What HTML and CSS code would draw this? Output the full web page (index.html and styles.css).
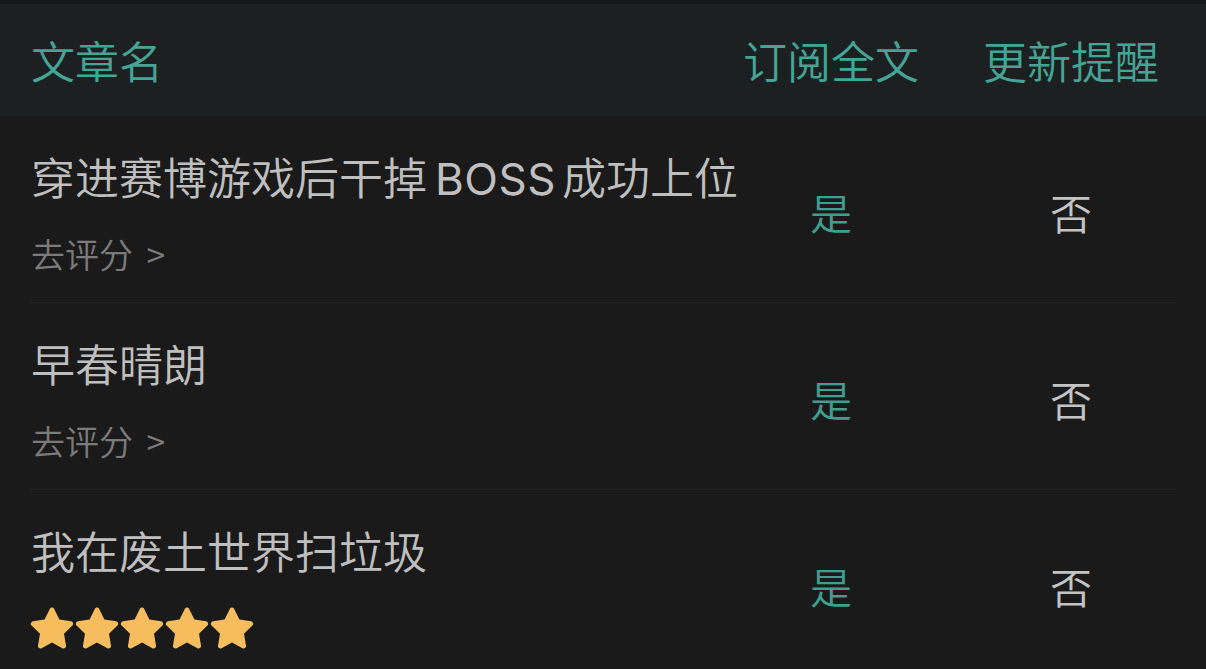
FILE: index.html
```html
<!DOCTYPE html>
<html lang="zh">
<head>
<meta charset="utf-8">
<link rel="stylesheet" href="styles.css">
</head>
<body>
<div class="page">
  <div class="topstrip"></div>
  <header class="head grid">
    <div class="h-name">文章名</div>
    <div class="h-col">订阅全文</div>
    <div class="h-col">更新提醒</div>
  </header>
  <div class="list">
    <div class="row grid">
      <div class="info">
        <div class="title">穿进赛博游戏后干掉<span class="latin">BOSS</span>成功上位</div>
        <div class="sub">去评分 &gt;</div>
      </div>
      <div class="yes">是</div>
      <div class="no">否</div>
    </div>
    <div class="row grid">
      <div class="info">
        <div class="title">早春晴朗</div>
        <div class="sub">去评分 &gt;</div>
      </div>
      <div class="yes">是</div>
      <div class="no">否</div>
    </div>
    <div class="row grid last">
      <div class="info">
        <div class="title">我在废土世界扫垃圾</div>
        <div class="stars">
          <svg class="star" viewBox="0 0 24 24"><path d="M12 1.8c.5 0 .9.3 1.1.7l2.6 5.3 5.8.8c.5.1.9.4 1 .9.2.5 0 1-.3 1.3l-4.2 4.1 1 5.8c.1.5-.1 1-.5 1.3-.4.3-.9.3-1.3.1L12 19.3l-5.2 2.8c-.4.2-.9.2-1.3-.1-.4-.3-.6-.8-.5-1.3l1-5.8-4.2-4.1c-.4-.3-.5-.8-.3-1.3.2-.5.6-.8 1-.9l5.8-.8 2.6-5.3c.2-.4.6-.7 1.1-.7z"/></svg>
          <svg class="star" viewBox="0 0 24 24"><path d="M12 1.8c.5 0 .9.3 1.1.7l2.6 5.3 5.8.8c.5.1.9.4 1 .9.2.5 0 1-.3 1.3l-4.2 4.1 1 5.8c.1.5-.1 1-.5 1.3-.4.3-.9.3-1.3.1L12 19.3l-5.2 2.8c-.4.2-.9.2-1.3-.1-.4-.3-.6-.8-.5-1.3l1-5.8-4.2-4.1c-.4-.3-.5-.8-.3-1.3.2-.5.6-.8 1-.9l5.8-.8 2.6-5.3c.2-.4.6-.7 1.1-.7z"/></svg>
          <svg class="star" viewBox="0 0 24 24"><path d="M12 1.8c.5 0 .9.3 1.1.7l2.6 5.3 5.8.8c.5.1.9.4 1 .9.2.5 0 1-.3 1.3l-4.2 4.1 1 5.8c.1.5-.1 1-.5 1.3-.4.3-.9.3-1.3.1L12 19.3l-5.2 2.8c-.4.2-.9.2-1.3-.1-.4-.3-.6-.8-.5-1.3l1-5.8-4.2-4.1c-.4-.3-.5-.8-.3-1.3.2-.5.6-.8 1-.9l5.8-.8 2.6-5.3c.2-.4.6-.7 1.1-.7z"/></svg>
          <svg class="star" viewBox="0 0 24 24"><path d="M12 1.8c.5 0 .9.3 1.1.7l2.6 5.3 5.8.8c.5.1.9.4 1 .9.2.5 0 1-.3 1.3l-4.2 4.1 1 5.8c.1.5-.1 1-.5 1.3-.4.3-.9.3-1.3.1L12 19.3l-5.2 2.8c-.4.2-.9.2-1.3-.1-.4-.3-.6-.8-.5-1.3l1-5.8-4.2-4.1c-.4-.3-.5-.8-.3-1.3.2-.5.6-.8 1-.9l5.8-.8 2.6-5.3c.2-.4.6-.7 1.1-.7z"/></svg>
          <svg class="star" viewBox="0 0 24 24"><path d="M12 1.8c.5 0 .9.3 1.1.7l2.6 5.3 5.8.8c.5.1.9.4 1 .9.2.5 0 1-.3 1.3l-4.2 4.1 1 5.8c.1.5-.1 1-.5 1.3-.4.3-.9.3-1.3.1L12 19.3l-5.2 2.8c-.4.2-.9.2-1.3-.1-.4-.3-.6-.8-.5-1.3l1-5.8-4.2-4.1c-.4-.3-.5-.8-.3-1.3.2-.5.6-.8 1-.9l5.8-.8 2.6-5.3c.2-.4.6-.7 1.1-.7z"/></svg>
        </div>
      </div>
      <div class="yes">是</div>
      <div class="no">否</div>
    </div>
  </div>
</div>
</body>
</html>
```

FILE: styles.css
```css
html, body {
  margin: 0;
  padding: 0;
  background: #1a1a1a;
}
body {
  font-family: "Noto Sans CJK SC", "Noto Sans", sans-serif;
  font-weight: 350;
  overflow: hidden;
}
.page {
  width: 1206px;
  height: 669px;
  overflow: hidden;
  background: #1a1a1a;
}
.topstrip {
  height: 4px;
  background: #161718;
}
.grid {
  display: grid;
  grid-template-columns: 666px 270px 210px;
  margin: 0 30px;
}
.head {
  height: 112px;
  margin: 0;
  padding: 0 30px;
  background: #1c2021;
  align-items: center;
  color: #44a596;
  font-size: 44px;
  line-height: 52px;
}
.h-name {
  padding-left: 1px;
}
.h-col {
  text-align: center;
}
.row {
  height: 186px;
  border-bottom: 1px solid #242424;
}
.row.last {
  border-bottom: none;
}
.info {
  padding-left: 1px;
  white-space: nowrap;
}
.title {
  margin-top: 34px;
  height: 52px;
  font-size: 44px;
  line-height: 52px;
  color: #bfbfbf;
}
.latin {
  font-family: "Inter", "Noto Sans", sans-serif;
  font-weight: 400;
  line-height: 1;
  margin: 0 6px 0 8px;
  letter-spacing: 0.5px;
}
.sub {
  margin-top: 30px;
  font-size: 34px;
  line-height: 44px;
  color: #7b7b7b;
  word-spacing: 6px;
}
.stars {
  margin-top: 30px;
  height: 44px;
  display: flex;
  align-items: center;
  margin-left: -3px;
}
.star {
  width: 48px;
  height: 48px;
  margin-right: -3px;
  fill: #f6bd5e;
}
.yes, .no {
  align-self: center;
  text-align: center;
  font-size: 42px;
  line-height: 52px;
  padding-top: 6px;
}
.yes {
  color: #3f9e8f;
}
.no {
  color: #c4c4c4;
}
```
